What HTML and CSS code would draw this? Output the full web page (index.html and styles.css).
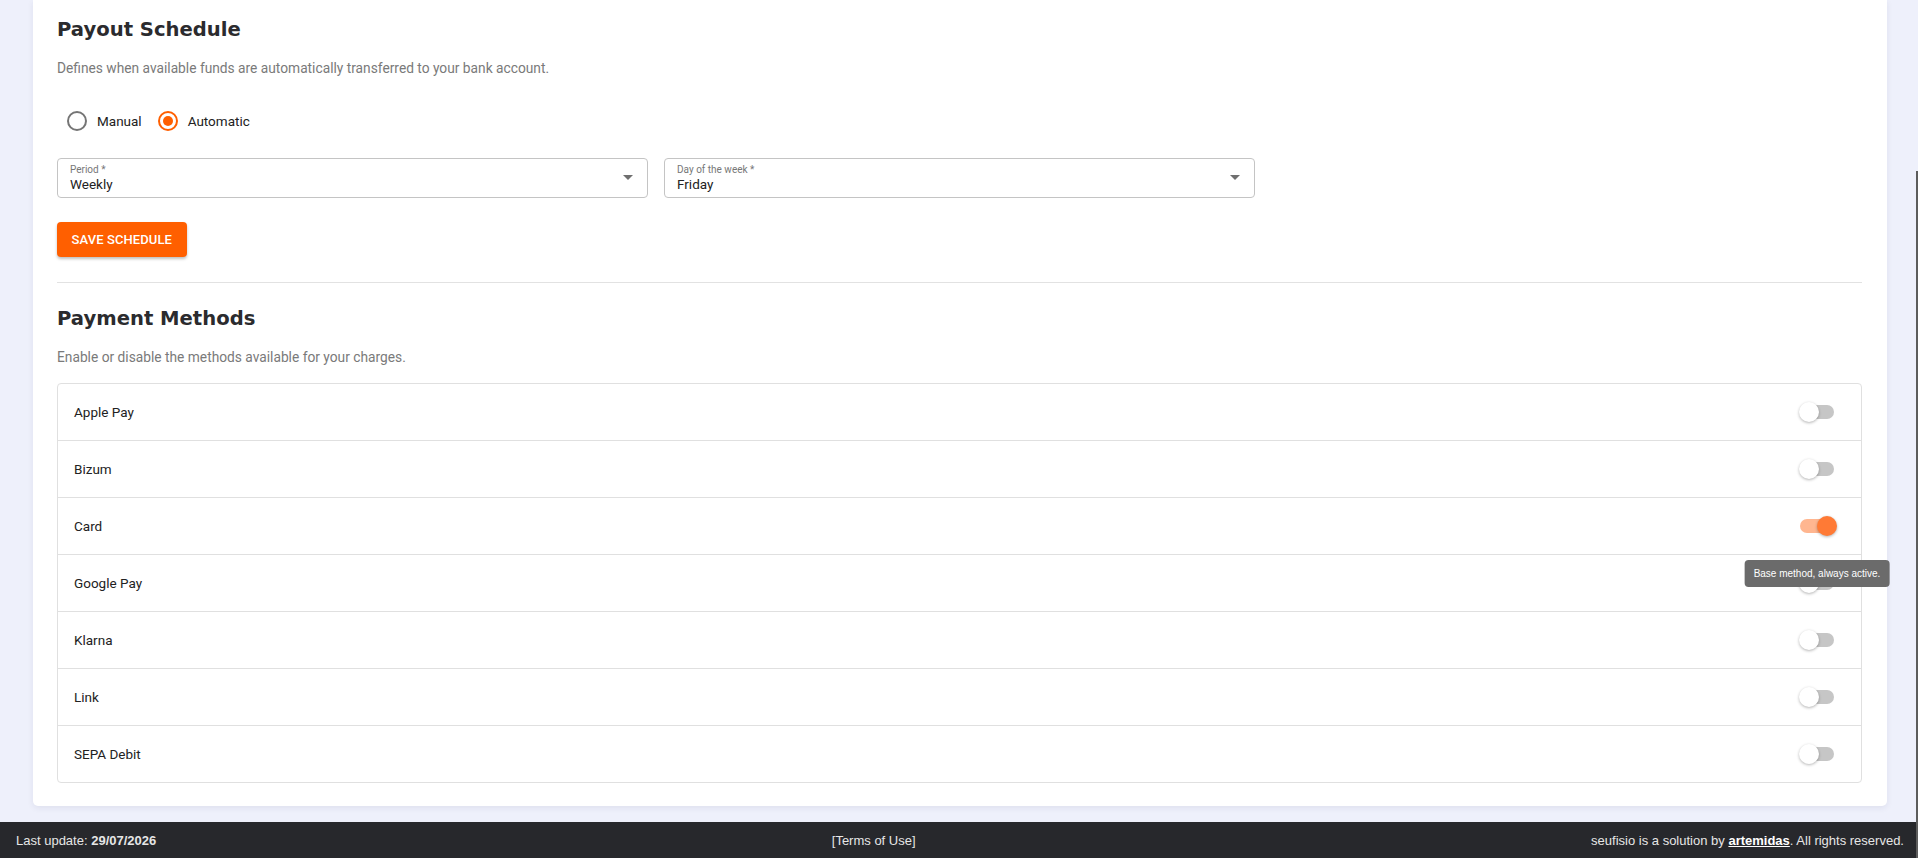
FILE: index.html
```html
<!DOCTYPE html>
<html>
<head>
    <title>Payments settings</title>
    <link rel="stylesheet" href="styles.css">
</head>
<body>
    <main class="page">
        <section class="card">
            <h2 class="section-title">Payout Schedule</h2>
            <p class="section-desc">Defines when available funds are automatically transferred to your bank account.</p>

            <div class="radio-group">
                <label class="radio-item">
                    <span class="radio"></span>
                    <span>Manual</span>
                </label>
                <label class="radio-item">
                    <span class="radio checked"></span>
                    <span>Automatic</span>
                </label>
            </div>

            <div class="field-grid">
                <div class="select">
                    <div class="select-text">
                        <span class="select-label">Period *</span>
                        <span class="select-value">Weekly</span>
                    </div>
                    <svg class="select-arrow" viewBox="0 0 24 24" width="24" height="24"><path d="M7 10l5 5 5-5z"/></svg>
                </div>
                <div class="select">
                    <div class="select-text">
                        <span class="select-label">Day of the week *</span>
                        <span class="select-value">Friday</span>
                    </div>
                    <svg class="select-arrow" viewBox="0 0 24 24" width="24" height="24"><path d="M7 10l5 5 5-5z"/></svg>
                </div>
            </div>

            <button type="button" class="btn-primary">Save schedule</button>

            <hr class="divider">

            <h2 class="section-title">Payment Methods</h2>
            <p class="section-desc">Enable or disable the methods available for your charges.</p>

            <ul class="method-list">
                <li class="method-row"><span>Apple Pay</span><span class="switch"><span class="thumb"></span></span></li>
                <li class="method-row"><span>Bizum</span><span class="switch"><span class="thumb"></span></span></li>
                <li class="method-row">
                    <span>Card</span>
                    <span class="switch on">
                        <span class="thumb"></span>
                        <span class="tooltip">Base method, always active.</span>
                    </span>
                </li>
                <li class="method-row"><span>Google Pay</span><span class="switch"><span class="thumb"></span></span></li>
                <li class="method-row"><span>Klarna</span><span class="switch"><span class="thumb"></span></span></li>
                <li class="method-row"><span>Link</span><span class="switch"><span class="thumb"></span></span></li>
                <li class="method-row"><span>SEPA Debit</span><span class="switch"><span class="thumb"></span></span></li>
            </ul>
        </section>
    </main>

    <footer class="footer">
        <span>Last update: <b>29/07/2026</b></span>
        <a href="#" class="footer-link">[Terms of Use]</a>
        <span>seufisio is a solution by <a href="#" class="brand">artemidas</a>. All rights reserved.</span>
    </footer>

    <div class="scroll-thumb"></div>
</body>
</html>
```

FILE: styles.css
```css
body {
    margin: 0;
    height: 858px;
    overflow: hidden;
    background: #eef0fb;
    font-family: Roboto, "Liberation Sans", sans-serif;
    color: #222;
    display: flex;
    flex-direction: column;
}

.page {
    flex: 1;
    padding: 0 31px 16px 33px;
}

.card {
    background: #ffffff;
    border-radius: 0 0 5px 5px;
    box-shadow: 0 2px 6px rgba(40, 40, 90, 0.08);
    padding: 18px 25px 23px 24px;
}

.section-title {
    font-family: "DejaVu Sans", sans-serif;
    font-weight: bold;
    font-size: 19.6px;
    line-height: 24px;
    color: #2b2b2e;
    margin: 0;
}

.section-desc {
    font-size: 13.75px;
    line-height: 20px;
    color: #7a7a7a;
    margin: 16px 0 0;
}

.radio-group {
    display: flex;
    align-items: center;
    height: 42px;
    margin-top: 22px;
    padding-left: 10px;
    font-size: 13.5px;
    gap: 16px;
}

.radio-item {
    display: flex;
    align-items: center;
    gap: 10px;
    cursor: pointer;
}

.radio {
    width: 20px;
    height: 20px;
    box-sizing: border-box;
    border: 2px solid #757575;
    border-radius: 50%;
    display: flex;
    align-items: center;
    justify-content: center;
}

.radio.checked {
    border-color: #ff5f00;
}

.radio.checked::after {
    content: "";
    width: 10px;
    height: 10px;
    border-radius: 50%;
    background: #ff5f00;
}

.field-grid {
    display: grid;
    grid-template-columns: repeat(3, 1fr);
    gap: 16px;
    margin-top: 16px;
}

.select {
    height: 40px;
    box-sizing: border-box;
    border: 1px solid #c4c4c4;
    border-radius: 4px;
    padding: 0 12px;
    display: flex;
    align-items: center;
    justify-content: space-between;
}

.select-text {
    display: flex;
    flex-direction: column;
}

.select-label {
    font-size: 10px;
    line-height: 12px;
    color: #777;
}

.select-value {
    font-size: 13.5px;
    line-height: 16px;
    color: #222;
}

.select-arrow {
    fill: #6f6f6f;
    margin-right: -5px;
    margin-top: -2px;
}

.btn-primary {
    display: block;
    margin-top: 24px;
    height: 35px;
    padding: 0 14.5px;
    background: #ff5f00;
    color: #ffffff;
    border: none;
    border-radius: 4px;
    font-family: Roboto, sans-serif;
    font-weight: 500;
    font-size: 13px;
    letter-spacing: 0.1px;
    text-transform: uppercase;
    box-shadow: 0 2px 3px rgba(0, 0, 0, 0.25);
    cursor: pointer;
}

.divider {
    border: none;
    border-top: 1px solid #e2e2e2;
    margin: 25px 0 24px;
}

.method-list {
    list-style: none;
    margin: 16px 0 0;
    padding: 0;
    border: 1px solid #e0e0e0;
    border-radius: 4px;
}

.method-row {
    height: 56px;
    padding: 0 27px 0 16px;
    display: flex;
    align-items: center;
    justify-content: space-between;
    font-size: 13.5px;
    border-bottom: 1px solid #e0e0e0;
}

.method-row:last-child {
    border-bottom: none;
}

.switch {
    position: relative;
    width: 34px;
    height: 14px;
    border-radius: 7px;
    background: #c6c6c6;
}

.switch .thumb {
    position: absolute;
    left: -1px;
    top: -3px;
    width: 20px;
    height: 20px;
    border-radius: 50%;
    background: #ffffff;
    box-shadow: 0 1px 3px rgba(0, 0, 0, 0.3);
}

.switch.on {
    background: #ffb690;
}

.switch.on .thumb {
    left: 17px;
    background: #ff7a35;
}

.tooltip {
    position: absolute;
    z-index: 10;
    top: 41px;
    left: 50%;
    transform: translateX(-50%);
    white-space: nowrap;
    background: #6b6b6b;
    color: #ffffff;
    font-family: "Liberation Sans", Arial, sans-serif;
    font-size: 10px;
    line-height: 13px;
    padding: 7px 9px;
    border-radius: 4px;
}

.footer {
    height: 36px;
    background: #27282c;
    color: #e6e6e6;
    font-family: "Liberation Sans", Arial, sans-serif;
    font-size: 13px;
    display: flex;
    align-items: center;
    justify-content: space-between;
    padding: 0 14px 0 16px;
}

.footer-link {
    color: #e6e6e6;
    text-decoration: none;
}

.brand {
    color: #ffffff;
    font-weight: bold;
}

.scroll-thumb {
    position: fixed;
    right: 0;
    top: 171px;
    bottom: 0;
    width: 2px;
    background: #5c5c5c;
}
```
